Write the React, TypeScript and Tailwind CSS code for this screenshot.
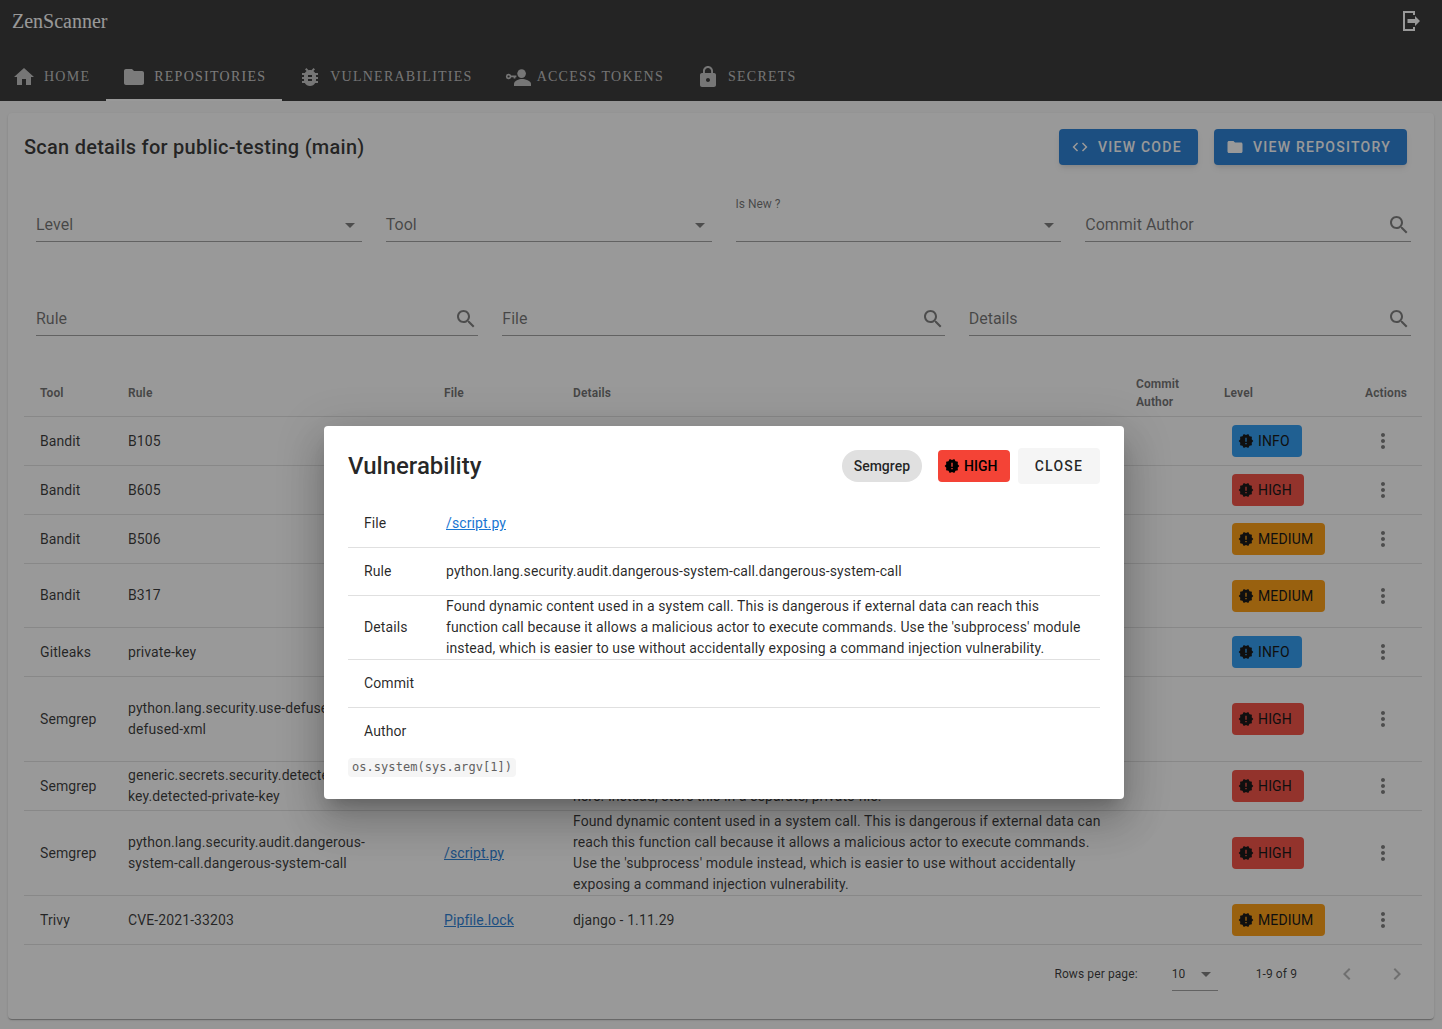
import React from 'react';

const icons = {
  home: 'M10 20v-6h4v6h5v-8h3L12 3 2 12h3v8z',
  folder: 'M10 4H4c-1.1 0-1.99.9-1.99 2L2 18c0 1.1.9 2 2 2h16c1.1 0 2-.9 2-2V8c0-1.1-.9-2-2-2h-8l-2-2z',
  bug: 'M20 8h-2.81c-.45-.78-1.07-1.45-1.82-1.96L17 4.41 15.59 3l-2.17 2.17C12.96 5.06 12.49 5 12 5c-.49 0-.96.06-1.41.17L8.41 3 7 4.41l1.62 1.63C7.88 6.55 7.26 7.22 6.81 8H4v2h2.09c-.05.33-.09.66-.09 1v1H4v2h2v1c0 .34.04.67.09 1H4v2h2.81c1.04 1.79 2.97 3 5.19 3s4.15-1.21 5.19-3H20v-2h-2.09c.05-.33.09-.66.09-1v-1h2v-2h-2v-1c0-.34-.04-.67-.09-1H20V8zm-6 8h-4v-2h4v2zm0-4h-4v-2h4v2z',
  lock: 'M18 8h-1V6c0-2.76-2.24-5-5-5S7 3.24 7 6v2H6c-1.1 0-2 .9-2 2v10c0 1.1.9 2 2 2h12c1.1 0 2-.9 2-2V10c0-1.1-.9-2-2-2zm-6 9c-1.1 0-2-.9-2-2s.9-2 2-2 2 .9 2 2-.9 2-2 2zm3.1-9H8.9V6c0-1.71 1.39-3.1 3.1-3.1 1.71 0 3.1 1.39 3.1 3.1v2z',
  code: 'M9.4 16.6 4.8 12l4.6-4.6L8 6l-6 6 6 6 1.4-1.4zm5.2 0 4.6-4.6-4.6-4.6L16 6l6 6-6 6-1.4-1.4z',
  search: 'M15.5 14h-.79l-.28-.27C15.41 12.59 16 11.11 16 9.5 16 5.91 13.09 3 9.5 3S3 5.91 3 9.5 5.91 16 9.5 16c1.61 0 3.09-.59 4.23-1.57l.27.28v.79l5 4.99L20.49 19l-4.99-5zm-6 0C7.01 14 5 11.99 5 9.5S7.01 5 9.5 5 14 7.01 14 9.5 11.99 14 9.5 14z',
  more: 'M12 8c1.1 0 2-.9 2-2s-.9-2-2-2-2 .9-2 2 .9 2 2 2zm0 2c-1.1 0-2 .9-2 2s.9 2 2 2 2-.9 2-2-.9-2-2-2zm0 6c-1.1 0-2 .9-2 2s.9 2 2 2 2-.9 2-2-.9-2-2-2z',
  alert: 'M23 12l-2.44-2.78.34-3.68-3.61-.82-1.89-3.18L12 3 8.6 1.54 6.71 4.72l-3.61.81.34 3.68L1 12l2.44 2.78-.34 3.69 3.61.82 1.89 3.18L12 21l3.4 1.46 1.89-3.18 3.61-.82-.34-3.68L23 12zm-10 5h-2v-2h2v2zm0-4h-2V7h2v6z',
  drop: 'M7 10l5 5 5-5z',
  prev: 'M15.41 7.41 14 6l-6 6 6 6 1.41-1.41L10.83 12z',
  next: 'M10 6 8.59 7.41 13.17 12l-4.58 4.59L10 18l6-6z',
};

const Icon = ({ d, className }: { d: string; className: string }) => (
  <svg viewBox="0 0 24 24" fill="currentColor" className={className}>
    <path d={d} />
  </svg>
);

// person with a key, no matching icon in the packages
const TokenIcon = () => (
  <svg viewBox="0 0 26 24" fill="currentColor" className="w-[26px] h-6 mr-[6px] shrink-0">
    <circle cx="16.6" cy="8.6" r="4.3" />
    <path d="M9 21v-2.2c0-3 5-4.8 8-4.8s9 1.8 9 4.8V21z" />
    <path fillRule="evenodd" d="M3.6 8.8a2.7 2.7 0 0 1 2.6 1.8h5.2v1.6h-1v1.4H8.6v-1.4H6.2a2.7 2.7 0 1 1-2.6-3.4zm0 1.6a1.1 1.1 0 1 0 0 2.2 1.1 1.1 0 0 0 0-2.2z" />
  </svg>
);

const LogoutIcon = () => (
  <svg viewBox="0 0 24 24" className="w-6 h-6 text-white">
    <path d="M16 6V3H6v18h10v-3" fill="none" stroke="currentColor" strokeWidth="2" />
    <path d="M9.5 10H17V7l5 5-5 5v-3H9.5z" fill="currentColor" />
  </svg>
);

const tabs = [
  { label: 'Home', icon: icons.home, cls: 'pl-3 pr-4' },
  { label: 'Repositories', icon: icons.folder, cls: 'px-4', active: true },
  { label: 'Vulnerabilities', icon: icons.bug, cls: 'px-4' },
  { label: 'Access Tokens', icon: null, cls: 'px-4' },
  { label: 'Secrets', icon: icons.lock, cls: 'px-4' },
];

type Row = {
  tool: string;
  rule: string;
  file: string;
  details: string;
  level: 'INFO' | 'HIGH' | 'MEDIUM';
};

const rows: Row[] = [
  { tool: 'Bandit', rule: 'B105', file: '/script.py', details: "Possible hardcoded password: 'secret'", level: 'INFO' },
  { tool: 'Bandit', rule: 'B605', file: '/script.py', details: 'Starting a process with a shell, possible injection detected.', level: 'HIGH' },
  { tool: 'Bandit', rule: 'B506', file: '/script.py', details: 'Use of unsafe yaml load. Allows instantiation of arbitrary objects.', level: 'MEDIUM' },
  {
    tool: 'Bandit',
    rule: 'B317',
    file: '/script.py',
    details: 'Using xml.sax.parse to parse untrusted XML data is known to be vulnerable to XML attacks. Replace xml.sax.parse with its defusedxml equivalent function or make sure defusedxml.defuse_stdlib() is called before parsing.',
    level: 'MEDIUM',
  },
  { tool: 'Gitleaks', rule: 'private-key', file: '/id_rsa', details: 'Private Key', level: 'INFO' },
  {
    tool: 'Semgrep',
    rule: 'python.lang.security.use-defused-xml.use-defused-xml',
    file: '/script.py',
    details: 'The Python documentation recommends using defusedxml instead of xml because the native Python xml library is vulnerable to XML External Entity (XXE) attacks. These attacks can leak confidential data and XML bombs can cause denial of service. Do not use this library to parse untrusted input.',
    level: 'HIGH',
  },
  {
    tool: 'Semgrep',
    rule: 'generic.secrets.security.detected-private-key.detected-private-key',
    file: '/id_rsa',
    details: 'Private Key detected. This is a sensitive credential and should not be hardcoded here. Instead, store this in a separate, private file.',
    level: 'HIGH',
  },
  {
    tool: 'Semgrep',
    rule: 'python.lang.security.audit.dangerous-system-call.dangerous-system-call',
    file: '/script.py',
    details: "Found dynamic content used in a system call. This is dangerous if external data can reach this function call because it allows a malicious actor to execute commands. Use the 'subprocess' module instead, which is easier to use without accidentally exposing a command injection vulnerability.",
    level: 'HIGH',
  },
  { tool: 'Trivy', rule: 'CVE-2021-33203', file: 'Pipfile.lock', details: 'django - 1.11.29', level: 'MEDIUM' },
];

const levelClass = {
  INFO: 'bg-[#2196f3]',
  HIGH: 'bg-[#f44336]',
  MEDIUM: 'bg-[#ff9800]',
};

const LevelBadge = ({ level }: { level: Row['level'] }) => (
  <span className={`inline-flex items-center h-8 pl-[6px] pr-3 rounded text-sm tracking-[0.15px] text-black ${levelClass[level]}`}>
    <Icon d={icons.alert} className="w-4 h-4 mr-1" />
    {level}
  </span>
);

const Field = ({ label, search, caption }: { label?: string; search?: boolean; caption?: string }) => (
  <div className="flex flex-col justify-end">
    {caption && <div className="text-xs text-black/60 -mb-[3px] leading-[18px]">{caption}</div>}
    <div className="flex items-center justify-between h-8 border-b border-black/40 text-black/60 pb-[2px]">
      <span className="text-base">{label}</span>
      <Icon d={search ? icons.search : icons.drop} className="w-6 h-6 text-black/55" />
    </div>
  </div>
);

const DetailRow = ({ label, children, last }: { label: string; children?: React.ReactNode; last?: boolean }) => (
  <tr>
    <td className={`w-[82px] px-4 py-0 ${last ? 'h-[47px]' : 'h-12 border-b border-[#e0e0e0]'}`}>{label}</td>
    <td className={`px-4 py-0 ${last ? 'h-[47px]' : 'h-12 border-b border-[#e0e0e0]'}`}>{children}</td>
  </tr>
);

export default function App() {
  return (
    <div className="relative h-[1029px] overflow-hidden bg-[#fafafa] font-['Roboto',sans-serif] text-black/85">
      <header className="h-[101px] bg-[#272727] text-white font-['Liberation_Serif',serif]">
        <div className="flex items-center justify-between h-[42px] pl-3 pr-5">
          <span className="text-xl">ZenScanner</span>
          <LogoutIcon />
        </div>
        <nav className="flex h-[59px] items-end">
          {tabs.map(tab => (
            <div
              key={tab.label}
              className={`flex items-center h-12 pt-[2px] border-b-2 text-sm uppercase tracking-[1.25px] ${tab.cls} ${tab.active ? 'border-white text-white/75' : 'border-transparent text-white/70'}`}
            >
              {tab.icon ? <Icon d={tab.icon} className="w-6 h-6 mr-2 shrink-0" /> : <TokenIcon />}
              {tab.label}
            </div>
          ))}
        </nav>
      </header>

      <main className="mx-2 mt-3 h-[906px] bg-white rounded shadow-[0_2px_1px_-1px_rgba(0,0,0,0.2),0_1px_1px_0_rgba(0,0,0,0.14),0_1px_3px_0_rgba(0,0,0,0.12)] pl-4 pr-3 pt-4">
        <div className="flex items-start justify-between pr-[15px]">
          <h1 className="text-xl font-medium leading-9 tracking-[0.25px]">Scan details for public-testing (main)</h1>
          <div className="flex gap-4">
            <button className="flex items-center h-9 w-[139px] pl-3 rounded bg-[#1976d2] text-white text-sm font-medium uppercase tracking-[1.25px] shadow-md">
              <Icon d={icons.code} className="w-[18px] h-[18px] mr-[9px]" />
              View code
            </button>
            <button className="flex items-center h-9 w-[193px] pl-3 rounded bg-[#1976d2] text-white text-sm font-medium uppercase tracking-[1.25px] shadow-md">
              <Icon d={icons.folder} className="w-[18px] h-[18px] mr-[9px]" />
              View repository
            </button>
          </div>
        </div>

        <div className="ml-3 mr-[11px] mt-[29px] grid grid-cols-4 gap-6 h-[48px]">
          <Field label="Level" />
          <Field label="Tool" />
          <Field caption="Is New ?" />
          <Field label="Commit Author" search />
        </div>
        <div className="ml-3 mr-[11px] mt-[62px] grid grid-cols-3 gap-6">
          <Field label="Rule" search />
          <Field label="File" search />
          <Field label="Details" search />
        </div>

        <table className="w-full mt-[34px] table-fixed border-separate border-spacing-0 text-sm leading-[21px] tracking-[0.1px]">
          <colgroup>
            <col className="w-[88px]" />
            <col className="w-[316px]" />
            <col className="w-[129px]" />
            <col className="w-[563px]" />
            <col className="w-[88px]" />
            <col className="w-[132px]" />
            <col />
          </colgroup>
          <thead>
            <tr className="text-xs leading-[18px] text-left text-black/60">
              {['Tool', 'Rule', 'File', 'Details', 'Commit Author', 'Level'].map(h => (
                <th key={h} className="px-4 pt-[5px] pb-[5px] border-b border-[#e0e0e0] font-bold">{h}</th>
              ))}
              <th className="pl-4 pr-[15px] pt-[5px] pb-[5px] border-b border-[#e0e0e0] font-bold text-right">Actions</th>
            </tr>
          </thead>
          <tbody>
            {rows.map((row, idx) => (
              <tr key={idx}>
                <td className="h-[49px] px-4 py-0 border-b border-[#e0e0e0]">{row.tool}</td>
                <td className="h-[49px] px-4 py-0 border-b border-[#e0e0e0]">{row.rule}</td>
                <td className="h-[49px] px-4 py-0 border-b border-[#e0e0e0]"><a className="text-[#1976d2] underline">{row.file}</a></td>
                <td className="h-[49px] px-4 py-0 border-b border-[#e0e0e0]">{row.details}</td>
                <td className="h-[49px] px-4 py-0 border-b border-[#e0e0e0]"></td>
                <td className="h-[49px] px-6 py-0 border-b border-[#e0e0e0]"><LevelBadge level={row.level} /></td>
                <td className="h-[49px] px-4 py-0 border-b border-[#e0e0e0]">
                  <div className="flex justify-end pr-[11px] text-black/55"><Icon d={icons.more} className="w-6 h-6" /></div>
                </td>
              </tr>
            ))}
          </tbody>
        </table>

        <div className="flex items-center justify-end h-[58px] text-xs tracking-[0.1px] pr-[13px]">
          <span>Rows per page:</span>
          <div className="flex items-center h-[33px] w-[46px] ml-[34px] border-b border-black/40">
            <span className="flex-1">10</span>
            <Icon d={icons.drop} className="w-6 h-6 text-black/55" />
          </div>
          <span className="ml-[38px]">1-9 of 9</span>
          <Icon d={icons.prev} className="w-6 h-6 ml-[38px] text-black/30" />
          <Icon d={icons.next} className="w-6 h-6 ml-[26px] text-black/30" />
        </div>
      </main>

      <div className="absolute inset-0 bg-[#212121]/46" />

      <div className="absolute left-[324px] top-[426px] w-[800px] h-[373px] bg-white rounded px-6 pt-[22px] text-sm leading-[21px] tracking-[0.1px] text-black/85 shadow-[0_11px_15px_-7px_rgba(0,0,0,0.2),0_24px_38px_3px_rgba(0,0,0,0.14),0_9px_46px_8px_rgba(0,0,0,0.12)]">
        <div className="flex items-center h-9">
          <h2 className="text-2xl font-medium tracking-normal flex-1">Vulnerability</h2>
          <span className="flex items-center h-8 px-3 rounded-full bg-[#e0e0e0] font-medium text-black/85 tracking-normal">Semgrep</span>
          <span className="inline-flex items-center h-8 w-[72px] pl-[6px] rounded bg-[#f44336] font-medium text-black ml-4 tracking-normal">
            <Icon d={icons.alert} className="w-4 h-4 mr-1" />
            HIGH
          </span>
          <button className="h-9 w-[82px] ml-2 rounded bg-[#f5f5f5] font-medium tracking-[1.25px] text-black/85">CLOSE</button>
        </div>
        <table className="w-full mt-4 border-separate border-spacing-0 table-fixed">
          <colgroup>
            <col className="w-[82px]" />
            <col />
          </colgroup>
          <tbody>
            <DetailRow label="File"><a className="text-[#1976d2] underline">/script.py</a></DetailRow>
            <DetailRow label="Rule">python.lang.security.audit.dangerous-system-call.dangerous-system-call</DetailRow>
            <DetailRow label="Details">Found dynamic content used in a system call. This is dangerous if external data can reach this function call because it allows a malicious actor to execute commands. Use the 'subprocess' module instead, which is easier to use without accidentally exposing a command injection vulnerability.</DetailRow>
            <DetailRow label="Commit" />
            <DetailRow label="Author" last />
          </tbody>
        </table>
        <code className="inline-block mt-[3px] px-1 rounded-sm bg-[#f5f5f5] font-['DejaVu_Sans_Mono',monospace] text-xs tracking-[0.05px] leading-[19px] text-[#616161]">os.system(sys.argv[1])</code>
      </div>
    </div>
  );
}
